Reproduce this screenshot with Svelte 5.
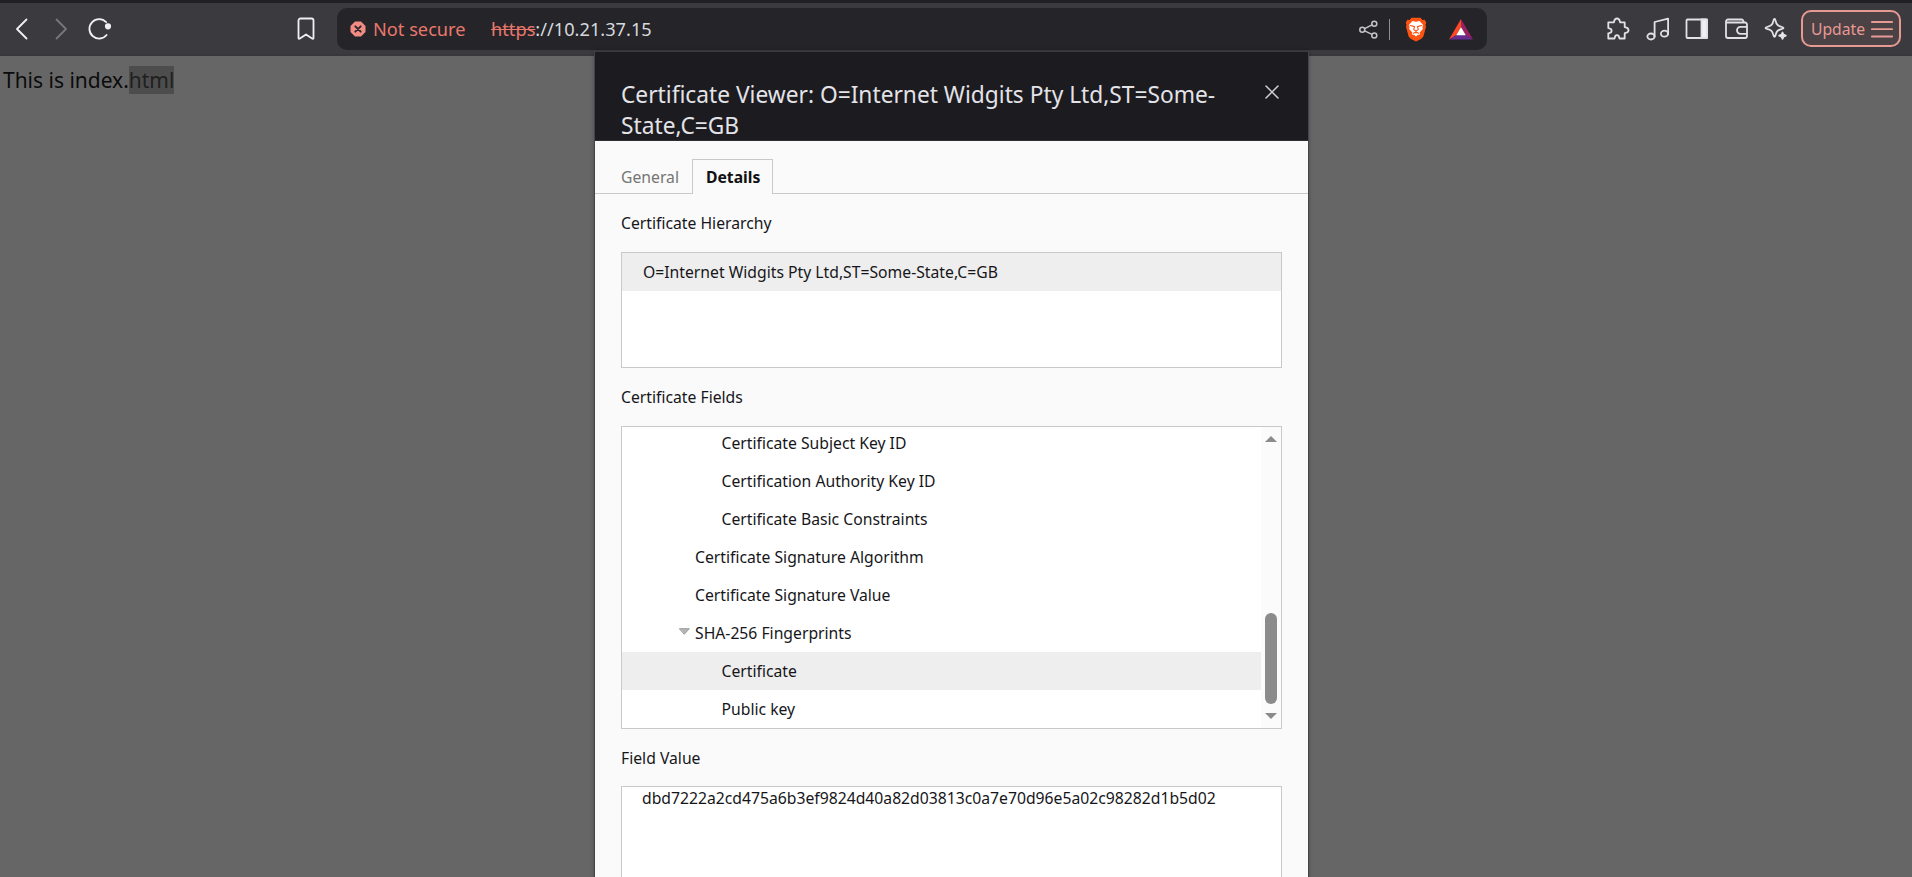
<script>
  const fields = [
    { label: 'Certificate Subject Key ID', depth: 2 },
    { label: 'Certification Authority Key ID', depth: 2 },
    { label: 'Certificate Basic Constraints', depth: 2 },
    { label: 'Certificate Signature Algorithm', depth: 1 },
    { label: 'Certificate Signature Value', depth: 1 },
    { label: 'SHA-256 Fingerprints', depth: 1, open: true },
    { label: 'Certificate', depth: 2, selected: true },
    { label: 'Public key', depth: 2 }
  ];
</script>

<div class="browser">
  <header class="toolbar">
    <div class="nav">
      <svg width="22" height="22" viewBox="0 0 22 22"><path d="M15.500 1.500 6 11l9.500 9.500" /></svg>
      <svg class="dim" width="22" height="22" viewBox="0 0 22 22"><path d="M6.500 1.500 16 11l-9.500 9.500" /></svg>
      <svg width="24" height="24" viewBox="0 0 24 24"><path d="M18.600 18A9.700 9.700 0 1 1 18.200 5.200" /><circle cx="20" cy="9.300" r="2.200" class="solid" /></svg>
    </div>
    <svg class="bookmark" width="18" height="24" viewBox="0 0 18 24"><path d="M3.500 1.500h11a2 2 0 0 1 2 2v17.200q0 1.700-1.400.8L9 17.500l-6.100 4q-1.400.9-1.400-.8V3.500a2 2 0 0 1 2-2z" /></svg>
    <div class="omnibox">
      <svg class="warn" width="16" height="16" viewBox="0 0 16 16"><path class="badge" d="M5 .5h6L15.500 5v6L11 15.500H5L.5 11V5z" /><path class="cross" d="m5.300 5.300 5.400 5.400m0-5.400-5.400 5.400" /></svg>
      <span class="insecure">Not secure</span>
      <span class="url"><s>https</s>://10.21.37.15</span>
      <svg class="share" width="19" height="19" viewBox="0 0 19 19"><circle cx="3.300" cy="9.700" r="2.500" /><circle cx="15.300" cy="3.700" r="2.500" /><circle cx="15.300" cy="15.500" r="2.500" /><path d="m5.600 8.600 7.400-3.800M5.600 10.800l7.400 3.600" /></svg>
      <i class="rule"></i>
      <svg class="lion" width="22" height="25" viewBox="0 0 22 25"><path fill="#fb5412" d="M6.500.8h9l2 2.200 2.200-.3 1.600 3-.8 2.100.5 2-2.600 9.700-2 2.300L11 24.600l-5.400-2.800-2-2.300L1 9.800l.5-2L.7 5.700l1.600-3 2.200.3z" /><path fill="#fff" d="m7.500 4 3.500.7 3.500-.7 3.500 3.700-.5 2.500.2 2-3.100 3.300.6 2-2.200.3-2 1.800-2-1.800-2.200-.3.600-2L4.300 12.200l.2-2L4 7.700z" /><path fill="none" stroke="#fb5412" stroke-width="1.100" d="m5.500 8.500 4 1.100-.8 3 2.300 1.500 2.300-1.500-.8-3 4-1.100M11 14v2M8.500 16.200 11 15l2.500 1.200" /></svg>
      <svg class="bat" width="24" height="21" viewBox="0 0 24 21"><path fill="#ff4724" d="M12 0v7.500L7.500 16 0 20.500z" /><path fill="#9e1f63" d="m12 0 12 20.500-7.500-4.500L12 7.500z" /><path fill="#662d91" d="M0 20.500 7.500 16h9l7.500 4.500z" /><path fill="#fff" d="m12 8 4.800 8.200H7.200z" /></svg>
    </div>
    <div class="tools">
      <svg width="24" height="24" viewBox="0 0 24 24"><path d="M2.700 5.300h5.100c.6-.6.100-3.800 3.200-3.800s2.600 3.200 3.200 3.800h4.500v4.800c.6.600 3.800.1 3.800 3.100s-3.200 2.500-3.800 3.100v5.200h-5.200c-.5-.8 0-3.300-2.500-3.300s-2 2.500-2.500 3.300H2.300v-5.200c.8-.5 3.300 0 3.300-2.600s-2.500-2.100-3.300-2.600V5.300z" /></svg>
      <svg width="24" height="24" viewBox="0 0 24 24"><ellipse cx="5" cy="19.500" rx="3.600" ry="3" /><ellipse cx="18.500" cy="16.700" rx="3.600" ry="3" /><path d="M8.600 19.500V5l13.500-3.300v15" /></svg>
      <svg width="24" height="24" viewBox="0 0 24 24"><rect x="1.500" y="2.500" width="20.500" height="18.500" rx="1" /><path class="solid" d="M16.500 2.500h5.500v18.500h-5.500z" /></svg>
      <svg width="24" height="24" viewBox="0 0 24 24"><path d="M18.500 5.300V4.500a2 2 0 0 0-2-2H3a2 2 0 0 0-2 2v14.500a2 2 0 0 0 2 2h17a2 2 0 0 0 2-2V7.500a2 2 0 0 0-2-2H1.500M22 9.800h-6.500a3.500 3.500 0 0 0 0 7H22" /></svg>
      <svg width="24" height="24" viewBox="0 0 24 24"><path d="M10.500 2q.7 0 1 1.500c1 4.300 2.200 5.400 6.500 6.500q3 .900 0 1.900c-2.600.7-3.900 1.200-4.900 2.500-.8 1.100-1.200 2.400-1.600 4q-1 3-2 0c-1.100-4.300-2.200-5.500-6.500-6.500q-3-1 0-1.900c4.300-1.100 5.500-2.200 6.500-6.500q.3-1.500 1-1.500z" /><path class="solid" d="m18.500 15.500 1 2.200 2.300.9-2.300 1-1 2.200-1-2.200-2.300-1 2.300-.9z" /></svg>
    </div>
    <button class="update"><span>Update</span><svg width="22" height="18" viewBox="0 0 22 18"><path d="M.8 2h20.400M.8 9.200h20.400M.8 16.500h20.400" /></svg></button>
  </header>

  <main class="page"><p>This is index.<mark>html</mark></p></main>

  <section class="dialog">
    <div class="title">
      <h1>Certificate Viewer: O=Internet Widgits Pty Ltd,ST=Some-State,C=GB</h1>
      <svg width="14" height="14" viewBox="0 0 14 14"><path d="m1 1 12 12M13 1 1 13" /></svg>
    </div>
    <div class="body">
      <nav class="tabs"><span class="tab">General</span><span class="tab active">Details</span></nav>
      <div class="content">
        <h2>Certificate Hierarchy</h2>
        <div class="box hierarchy"><div class="row selected root">O=Internet Widgits Pty Ltd,ST=Some-State,C=GB</div></div>
        <h2>Certificate Fields</h2>
        <div class="box fields">
          <div class="tree">
            {#each fields as f}
              <div class="row depth{f.depth}" class:selected={f.selected}>
                {#if f.open}<svg class="twist" width="11" height="7" viewBox="0 0 11 7"><path d="M.7.700h9.600L5.500 6z" /></svg>{/if}<span>{f.label}</span>
              </div>
            {/each}
          </div>
          <div class="scrollbar">
            <svg width="12" height="6" viewBox="0 0 12 6"><path d="m6 0 6 6H0z" /></svg>
            <i class="thumb"></i>
            <svg width="12" height="6" viewBox="0 0 12 6"><path d="M0 0h12L6 6z" /></svg>
          </div>
        </div>
        <h2 class="last">Field Value</h2>
        <div class="box value">dbd7222a2cd475a6b3ef9824d40a82d03813c0a7e70d96e5a02c98282d1b5d02</div>
      </div>
    </div>
  </section>
</div>

<style>
  :global(body) { overflow: hidden; background: #666; }
  .browser { position: relative; height: 877px; overflow: hidden; background: #666; font-family: "Noto Sans", sans-serif; font-size: 15.730px; color: #16161a; }
  .browser :global(*) { box-sizing: border-box; }
  svg { display: block; flex: none; fill: none; stroke: #f0f0f2; stroke-width: 1.8; stroke-linecap: round; stroke-linejoin: round; }
  .solid { fill: #f0f0f2; }
  .toolbar { display: flex; align-items: center; height: 56px; padding-top: 1px; background: #3b3a3f; border-top: 3px solid #212025; border-bottom: 2px solid #38373d; }
  .nav { display: flex; align-items: center; gap: 16.500px; padding-left: 11px; margin-top: -1px; }
  .nav .dim { stroke: #77767b; }
  .bookmark { margin: -1px 0 0 185px; }
  .omnibox { display: flex; align-items: center; width: 1150px; height: 42px; margin-left: 22px; padding-left: 13px; border-radius: 10px; background: #252429; font-size: 18.220px; }
  .warn .badge { fill: #f28b82; stroke: none; }
  .warn .cross { stroke: #252429; }
  .insecure { margin-left: 7px; color: #e8776c; }
  .url { margin-left: 25.500px; color: #d5d9de; }
  .url s { color: #e8776c; }
  .share { margin-left: auto; stroke: #c3c2c6; stroke-width: 1.500; }
  .rule { width: 1px; height: 21px; margin: 0 15px 0 11px; background: #8e8d92; }
  .lion, .bat { stroke: none; }
  .bat { margin: 0 14px 0 22px; }
  .tools { display: flex; gap: 15.500px; margin: -1px 0 0 119px; }
  .tools svg { stroke: #e2e2e4; }
  .update { display: flex; align-items: center; justify-content: space-between; width: 100px; height: 37px; margin: -1px 0 0 13px; padding: 0 6px 0 8px; border: 2px solid #e79993; border-radius: 10px; background: #4b4246; color: #e79993; font: 15.700px "Noto Sans", sans-serif; }
  .update svg { stroke: #e79993; }
  .page p { margin: 10px 0 0 3px; font-size: 20.980px; line-height: 28px; color: #0b0b0b; }
  .page mark { background: #4d4d4d; color: #202020; }
  .dialog { position: absolute; left: 594px; top: 51px; width: 715px; height: 840px; border: 1px solid #45444c; border-top-color: #3b3a42; background: #fafafa; box-shadow: 0 0 4px rgba(0, 0, 0, .25); }
  .title { display: flex; justify-content: space-between; height: 89px; padding: 27px 29px 0 26px; border-bottom: 1px solid #2e2d33; background: #1c1b20; color: #e3e3e8; }
  .title h1 { width: 610px; margin: 0; font-size: 22.740px; font-weight: 400; line-height: 31px; }
  .title svg { margin-top: 6px; stroke: #d0d0d5; stroke-width: 1.500; }
  .tabs { display: flex; align-items: flex-end; height: 53px; padding-left: 12px; border-bottom: 1px solid #c9c9c9; }
  .tab { height: 35px; margin-bottom: -1px; padding: 0 12px 0 13px; border: 1px solid transparent; border-bottom: 0; line-height: 35px; color: #757575; }
  .tab.active { padding: 0 12px 0 13px; border-color: #c9c9c9; background: #fafafa; font-weight: 700; color: #111; }
  .content { padding: 0 26px; }
  h2 { margin: 0; height: 58px; padding-top: 17px; font-size: 15.730px; font-weight: 400; line-height: 24px; }
  h2.last { height: 57px; }
  .box { width: 661px; border: 1px solid #c9c9c9; background: #fff; }
  .hierarchy { height: 116px; }
  .row { display: flex; flex: none; align-items: center; height: 38px; }
  .selected { background: #eee; }
  .root { padding-left: 21px; }
  .fields { display: flex; height: 303px; overflow: hidden; }
  .tree { display: flex; flex: 1; flex-direction: column; justify-content: flex-end; overflow: hidden; }
  .depth1 { padding-left: 73px; }
  .depth2 { padding-left: 99.500px; }
  .twist { margin: -3px 5px 0 -16px; fill: #b5b5b5; stroke: #999; stroke-width: 1; }
  .scrollbar { display: flex; flex-direction: column; align-items: center; width: 20px; padding: 9px 0; background: #fbfbfb; }
  .scrollbar svg { fill: #8b8b8b; stroke: none; }
  .thumb { width: 12px; height: 91px; margin: auto 0 9px; border-radius: 6px; background: #8b8b8b; }
  .value { height: 140px; padding-left: 20px; line-height: 23px; }
</style>
